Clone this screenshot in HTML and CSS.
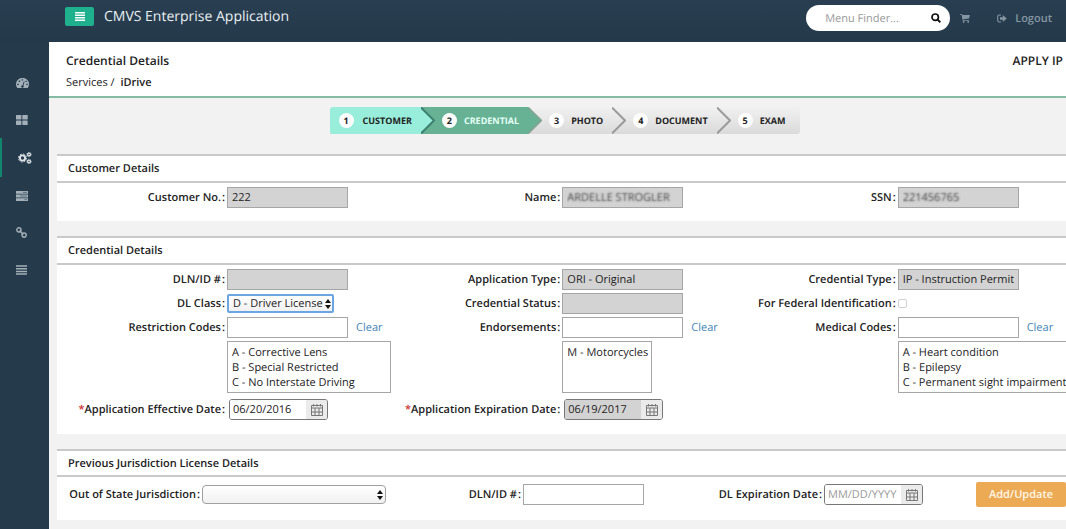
FILE: index.html
```html
<!DOCTYPE html>
<html lang="en">
<head>
<meta charset="utf-8">
<title>CMVS Enterprise Application</title>
<link rel="stylesheet" href="styles.css">
</head>
<body>
<svg class="defs" aria-hidden="true">
  <symbol id="i-cal" viewBox="0 0 12 12"><path d="M.5 1.500h11v10H.5zM.5 4h11M4 4v7.500M8 4v7.500M.5 8h11M2.500 0v2.500M9.500 0v2.500M6 0v2.500" fill="none" stroke="#777"/></symbol>
  <symbol id="i-updown" viewBox="0 0 6 10"><path d="M0 4l3-4 3 4zM0 6h6l-3 4z"/></symbol>
  <symbol id="i-chevron" viewBox="0 0 14 27"><path d="M0 0l14 13.500L0 27z"/></symbol>
  <symbol id="i-chevron-line" viewBox="0 0 14 27"><path d="M0 .5l13 13L0 26.500" fill="none" stroke-width="2"/></symbol>
</svg>
<header class="topbar">
  <button class="menu-btn" type="button" aria-label="Toggle menu"><svg width="10" height="9" viewBox="0 0 10 9"><path d="M0 .75h10M0 3.250h10M0 5.750h10M0 8.250h10" stroke="#fff" stroke-width="1.400"/></svg></button>
  <span class="app-name">CMVS Enterprise Application</span>
  <form class="search">
    <input type="text" placeholder="Menu Finder..." aria-label="Menu Finder">
    <button type="button" aria-label="Search"><svg width="10" height="10" viewBox="0 0 10 10" fill="none" stroke="#111"><circle cx="4.200" cy="4.200" r="3.200" stroke-width="1.700"/><path d="M6.600 6.600L9.300 9.300" stroke-width="2"/></svg></button>
  </form>
  <a class="cart" href="#" aria-label="Cart"><svg width="10" height="9" viewBox="0 0 11 10"><path d="M0 0h2.300l.3 1.200H11L10 5 3.600 5.800l.2.900H10v.8H3L1.700.9H0z"/><circle cx="4" cy="8.900" r="1"/><circle cx="9" cy="8.900" r="1"/></svg></a>
  <a class="logout" href="#"><svg width="10" height="9" viewBox="0 0 10 9"><path d="M4 1H2.200Q.7 1 .7 2.500v4Q.7 8 2.200 8H4" fill="none" stroke="currentColor" stroke-width="1.100"/><path d="M3 3.200h2.800V1L9.700 4.500 5.800 8V5.800H3z"/></svg>Logout</a>
</header>
<div class="shell">
  <nav class="side" aria-label="Main">
    <a href="#" aria-label="Dashboard"><svg width="13" height="10" viewBox="0 0 13 10"><path fill-rule="evenodd" d="M1.300 10A6.500 6.300 0 1 1 11.700 10zM5.200 8.300a1.300 1.300 0 1 0 2.200-.7L8.600 3.700l-.9-.3-1.100 3.800a1.300 1.300 0 0 0-1.400 1.100zM1.300 5.700v1.400h1.500V5.700zM2.800 2.600v1.300h1.400V2.600zM5.700 1.200v1.400h1.400V1.200zM9.400 2.700V4h1.300V2.700zM10.300 5.700v1.400h1.500V5.700z"/></svg></a>
    <a href="#" aria-label="Tiles"><svg width="12" height="10" viewBox="0 0 12 10"><rect width="5.400" height="4.500" rx=".6"/><rect x="6.300" width="5.400" height="4.500" rx=".6"/><rect y="5.400" width="5.400" height="4.500" rx=".6"/><rect x="6.300" y="5.400" width="5.400" height="4.500" rx=".6"/></svg></a>
    <a class="active" href="#" aria-label="Services"><svg class="line" width="14" height="12" viewBox="0 0 14 12" stroke="currentColor"><circle cx="4.500" cy="6" r="2.600" stroke-width="1.900"/><circle cx="4.500" cy="6" r="4" stroke-width="1" stroke-dasharray="1.700 1.440"/><circle cx="11" cy="2.500" r="1.400" stroke-width="1.300"/><circle cx="11" cy="9.500" r="1.400" stroke-width="1.300"/><circle cx="11" cy="2.500" r="2.200" stroke-width=".7" stroke-dasharray="1 .7"/><circle cx="11" cy="9.500" r="2.200" stroke-width=".7" stroke-dasharray="1 .7"/></svg></a>
    <a href="#" aria-label="Tasks"><svg width="12" height="10" viewBox="0 0 12 10"><path d="M0 0h12v2.800H0zM0 3.600h12v2.800H0zM0 7.200h12V10H0z"/><path d="M7 1.400h4M4 5h7M8.500 8.600H11" stroke="#5f7280" stroke-width="1"/></svg></a>
    <a href="#" aria-label="Links"><svg class="line" width="11" height="11" viewBox="0 0 11 11" stroke="currentColor" stroke-width="1.400"><circle cx="2.900" cy="2.900" r="2.100"/><circle cx="8.100" cy="8.100" r="2.100"/><path d="M3.600 3.600l3.800 3.800"/></svg></a>
    <a href="#" aria-label="List"><svg width="11" height="10" viewBox="0 0 11 10"><path d="M0 1h11M0 3.700h11M0 6.400h11M0 9.100h11" stroke="currentColor" stroke-width="1.500"/></svg></a>
  </nav>
  <main class="content">
    <div class="page-head">
      <div>
        <h1>Credential Details</h1>
        <p class="crumbs"><a href="#">Services</a> / <b>iDrive</b></p>
      </div>
      <strong class="mode">APPLY IP</strong>
    </div>
    <ol class="steps">
      <li class="done"><span class="num">1</span>CUSTOMER<svg class="arrow"><use href="#i-chevron"/><use class="edge" href="#i-chevron-line"/></svg></li>
      <li class="current"><span class="num">2</span>CREDENTIAL<svg class="arrow"><use href="#i-chevron"/><use class="edge" href="#i-chevron-line"/></svg></li>
      <li><span class="num">3</span>PHOTO<svg class="arrow"><use class="edge" href="#i-chevron-line"/></svg></li>
      <li><span class="num">4</span>DOCUMENT<svg class="arrow"><use class="edge" href="#i-chevron-line"/></svg></li>
      <li><span class="num">5</span>EXAM</li>
    </ol>
    <section class="panel">
      <h2>Customer Details</h2>
      <div class="fields">
        <div class="field"><label for="cno">Customer No.<i>:</i></label><input id="cno" type="text" value="222" readonly></div>
        <div class="field"><label for="name">Name<i>:</i></label><input id="name" class="masked" type="text" value="ARDELLE STROGLER" readonly></div>
        <div class="field"><label for="ssn">SSN<i>:</i></label><input id="ssn" class="masked" type="text" value="221456765" readonly></div>
      </div>
    </section>
    <section class="panel tall">
      <h2>Credential Details</h2>
      <div class="fields">
        <div class="field"><label for="dln">DLN/ID #<i>:</i></label><input id="dln" type="text" readonly></div>
        <div class="field"><label for="atype">Application Type<i>:</i></label><input id="atype" type="text" value="ORI - Original" readonly></div>
        <div class="field"><label for="ctype">Credential Type<i>:</i></label><input id="ctype" type="text" value="IP - Instruction Permit" readonly></div>

        <div class="field"><label for="cls">DL Class<i>:</i></label><span class="pick focus"><select id="cls"><option>D - Driver License</option></select><svg width="6" height="10"><use href="#i-updown"/></svg></span></div>
        <div class="field"><label for="cstat">Credential Status<i>:</i></label><input id="cstat" type="text" readonly></div>
        <div class="field"><label for="fed">For Federal Identification<i>:</i></label><input id="fed" type="checkbox"></div>

        <div class="field"><label for="rc">Restriction Codes<i>:</i></label><input id="rc" type="text"><a class="clear" href="#">Clear</a></div>
        <div class="field"><label for="en">Endorsements<i>:</i></label><input id="en" type="text"><a class="clear" href="#">Clear</a></div>
        <div class="field"><label for="mc">Medical Codes<i>:</i></label><input id="mc" type="text"><a class="clear" href="#">Clear</a></div>

        <div class="field"><span></span><select class="list" multiple size="3" aria-label="Restriction codes list"><option>A - Corrective Lens</option><option>B - Special Restricted</option><option>C - No Interstate Driving</option></select></div>
        <div class="field"><span></span><select class="list narrow" multiple size="3" aria-label="Endorsements list"><option>M - Motorcycles</option></select></div>
        <div class="field"><span></span><select class="list wide" multiple size="3" aria-label="Medical codes list"><option>A - Heart condition</option><option>B - Epilepsy</option><option>C - Permanent sight impairment</option></select></div>

        <div class="field dated"><label for="eff"><em>*</em>Application Effective Date<i>:</i></label><span class="date"><input id="eff" type="text" value="06/20/2016"><button type="button" aria-label="Pick date"><svg width="12" height="12"><use href="#i-cal"/></svg></button></span></div>
        <div class="field dated"><label for="exp"><em>*</em>Application Expiration Date<i>:</i></label><span class="date"><input id="exp" type="text" value="06/19/2017" readonly><button type="button" aria-label="Pick date"><svg width="12" height="12"><use href="#i-cal"/></svg></button></span></div>
      </div>
    </section>
    <section class="panel prior">
      <h2>Previous Jurisdiction License Details</h2>
      <div class="fields">
        <div class="field"><label for="oos">Out of State Jurisdiction<i>:</i></label><span class="pick state"><select id="oos"><option></option></select><svg width="6" height="10"><use href="#i-updown"/></svg></span></div>
        <div class="field"><label for="pdln">DLN/ID #<i>:</i></label><input id="pdln" type="text"></div>
        <div class="field"><label for="pexp">DL Expiration Date<i>:</i></label><span class="date"><input id="pexp" type="text" placeholder="MM/DD/YYYY"><button type="button" aria-label="Pick date"><svg width="12" height="12"><use href="#i-cal"/></svg></button></span></div>
        <button class="add" type="button">Add/Update</button>
      </div>
    </section>
  </main>
</div>
</body>
</html>
```
FILE: styles.css
```css
* { box-sizing: border-box; }
body {
  margin: 0;
  min-height: 100vh;
  overflow-x: hidden;
  display: flex;
  flex-direction: column;
  background: #253a4a;
  color: #222;
  font: 11px/15px "Open Sans", "Noto Sans", sans-serif;
  text-rendering: geometricPrecision;
}
input, select, button { font: inherit; color: inherit; margin: 0; text-rendering: inherit; }
button { padding: 0; border: 0; background: none; }
a { color: inherit; text-decoration: none; }
h1, h2, p, ol { margin: 0; padding: 0; }
.defs { position: absolute; width: 0; height: 0; }

.topbar {
  height: 42px;
  display: flex;
  align-items: center;
  padding: 0 14px 6px 65px;
  background: linear-gradient(#293e50, #24394a);
  color: #8496a2;
  font-weight: 600;
}
.topbar svg { fill: currentColor; }
.menu-btn {
  width: 29px;
  height: 19px;
  margin-bottom: 4px;
  display: flex;
  align-items: center;
  justify-content: center;
  border-radius: 2px;
  background: #1fb08e;
}
.app-name {
  margin: 0 auto 4px 10px;
  color: #e9eff2;
  font-size: 14px;
  font-weight: 400;
}
.search {
  width: 144px;
  height: 26px;
  display: flex;
  align-items: center;
  padding: 0 9px 0 19px;
  border-radius: 13px;
  background: #fff;
}
.search input {
  flex: 1;
  min-width: 0;
  padding: 0;
  border: 0;
  outline: 0;
  background: none;
  font-weight: 400;
}
.search button { display: flex; }
.search button svg { fill: none; }
::placeholder { color: #999; opacity: 1; }
.cart { display: flex; margin: 0 27px 0 10px; }
.logout { display: flex; align-items: center; gap: 8px; }

.shell { flex: 1; display: flex; }
.side {
  width: 49px;
  display: flex;
  flex-direction: column;
  padding-top: 22px;
  color: #a3b0b9;
}
.side a {
  height: 37px;
  display: flex;
  align-items: center;
  padding-left: 16px;
}
.side svg { fill: currentColor; }
.side a.active { height: 39px; border-left: 2px solid #14856d; color: #dce4e8; }
.side .line { fill: none; }

.content { flex: 1; min-width: 0; background: #f2f2f2; }
.page-head {
  height: 56px;
  display: flex;
  justify-content: space-between;
  padding: 11px 3px 0 17px;
  border-bottom: 2px solid #85bba3;
  background: #fff;
}
.page-head h1, .mode { font-size: 12px; line-height: 16px; font-weight: 600; }
.crumbs { margin-top: 6px; }
.crumbs b { margin-left: 3px; font-weight: 600; }

.steps {
  display: flex;
  width: max-content;
  margin: 9px auto 20px;
  list-style: none;
  border-left: 15px solid #f2f2f2;
  border-radius: 3px;
  background: linear-gradient(#f1f1f1, #dadada);
  font-size: 9px;
  font-weight: 700;
}
.steps li {
  position: relative;
  height: 27px;
  display: flex;
  align-items: center;
  gap: 7px;
  padding: 0 9px 0 21px;
}
.steps li:first-child { padding-left: 9px; gap: 9px; border-radius: 3px 0 0 3px; }
.steps li:last-child { padding-right: 15px; }
.steps .done { background: #98eedb; }
.steps .current { background: #67b295; color: #e4fff4; }
.num {
  width: 15px;
  height: 15px;
  border-radius: 50%;
  background: #fdfdfd;
  color: #222;
  text-align: center;
}
.arrow {
  position: absolute;
  z-index: 1;
  left: 100%;
  top: 0;
  width: 14px;
  height: 27px;
  fill: #98eedb;
}
.edge { stroke: #9a9a9a; }
.done .edge { stroke: #3c7f6d; }
.current .arrow { fill: #67b295; }
.current .edge { stroke: #7fa596; }

.panel { margin: 0 0 15px 8px; border-top: 2px solid #c9c9c9; background: #fff; }
.panel h2 {
  height: 27px;
  padding: 0 11px;
  border-bottom: 2px solid #c9c9c9;
  font-size: 11px;
  line-height: 26px;
  font-weight: 600;
}
.fields {
  display: grid;
  grid-template-columns: repeat(3, 1fr);
  row-gap: 3px;
  padding: 4px 3px 13px 0;
}
.tall .fields { padding-bottom: 14px; }
.field {
  min-width: 0;
  display: grid;
  grid-template-columns: 170px max-content max-content;
  align-items: center;
}
.field label { padding-right: 2px; text-align: right; white-space: nowrap; font-weight: 600; }
.field label i { margin-left: 1px; font-style: normal; }
.field label em { color: #c33; font-style: normal; }
.field input[type=text] {
  width: 121px;
  height: 21px;
  padding: 0 4px;
  border: 1px solid #a6a6a6;
  border-radius: 0;
  background: #fff;
}
.field input[readonly] { background: #d3d3d3; }
.field input.masked { color: transparent; text-shadow: 0 0 2px #444; }
.field input[type=checkbox] {
  appearance: none;
  width: 9px;
  height: 9px;
  border: 1px solid #d0d0d0;
  border-radius: 2px;
  background: #fff;
}
.clear { margin-left: 8px; color: #4686b5; }
.pick { position: relative; display: flex; }
.pick select {
  appearance: none;
  width: 107px;
  height: 19px;
  padding: 0 8px 0 4px;
  border: 1px solid #a0a0a0;
  border-radius: 4px;
  background: linear-gradient(#fff, #f1f1f1);
}
.pick svg { position: absolute; right: 3px; top: 5px; fill: #111; pointer-events: none; }
.pick.focus select { border: 2px solid #6ba5e2; border-radius: 2px; }
.pick.state select { width: 184px; }
.list {
  width: 164px;
  height: 52px;
  padding: 3px 0;
  overflow: hidden;
  border: 1px solid #a6a6a6;
  border-radius: 0;
  background: #fff;
}
.list option { min-height: 15px; padding: 0 4px; line-height: 15px; }
.narrow { width: 90px; }
.wide { width: 180px; }
.dated { padding-top: 3px; }
.dated .date { margin-left: 2px; }
.date {
  width: 99px;
  height: 21px;
  display: flex;
  overflow: hidden;
  border: 1px solid #777;
  border-radius: 3px;
}
.date input[type=text] { flex: 1; width: 0; height: 19px; padding: 0 3px; border: 0; }
.date button {
  width: 21px;
  display: flex;
  align-items: center;
  justify-content: center;
  background: #ebebeb;
}

.prior { margin-bottom: 9px; }
.prior h2 { height: 26px; }
.prior .fields { grid-template-columns: 341fr 301fr 277fr 90px; padding: 5px 0 13px; align-items: center; }
.prior .field { grid-template-columns: 145px max-content; }
.prior .field + .field { grid-template-columns: 125px max-content; }
.add { height: 25px; border-radius: 2px; background: #edaa55; color: #fff6e5; font-weight: 600; }
```
